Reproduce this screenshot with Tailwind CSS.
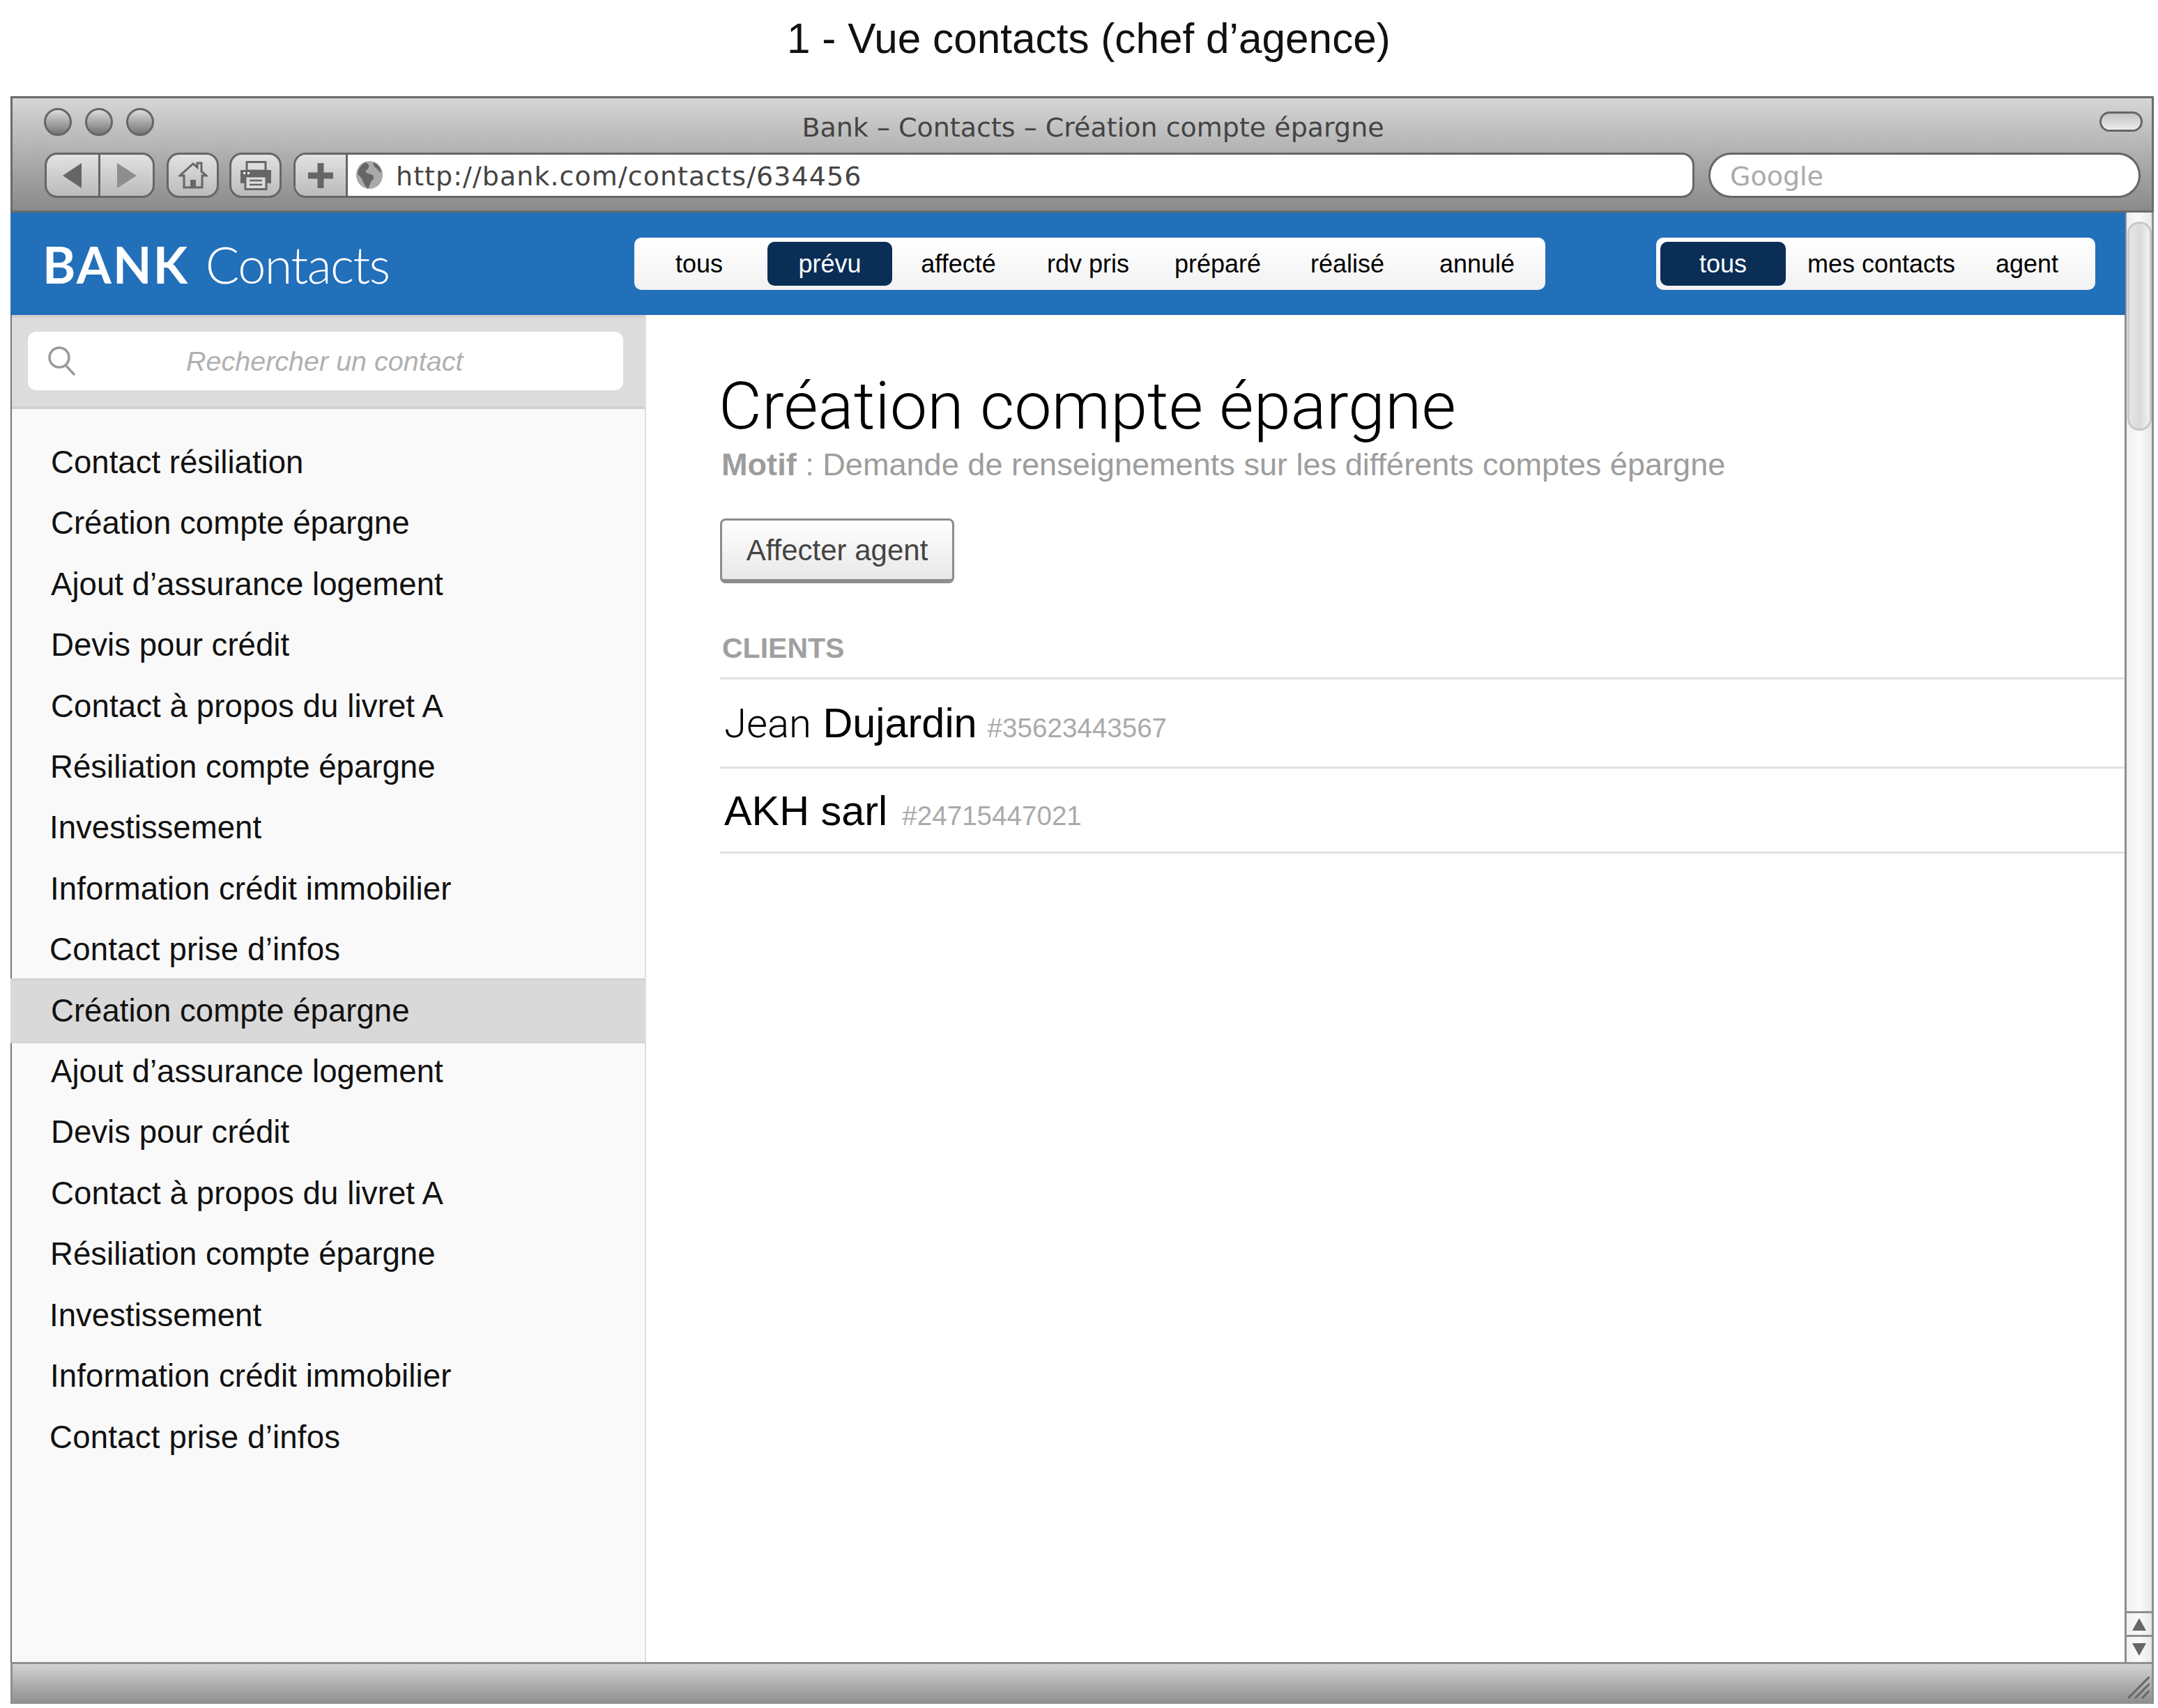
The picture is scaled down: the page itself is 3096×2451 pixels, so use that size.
<!DOCTYPE html>
<html lang="fr">
<head>
<meta charset="UTF-8">
<title>Bank - Contacts</title>
<script src="https://cdn.jsdelivr.net/npm/@tailwindcss/browser@4"></script>
</head>
<body class="bg-white font-['Liberation_Sans',sans-serif] w-[3096px] h-[2451px] overflow-hidden">
  <h1 class="h-[138px] pt-[22px] pl-[28px] text-center text-[60.3px] leading-[66px] text-[#111] font-normal">1 - Vue contacts (chef d’agence)</h1>

  <div class="ml-[15px] w-[3075px] h-[2307px] flex flex-col">
    <!-- browser toolbar -->
    <div class="h-[167px] shrink-0 border-[3px] border-[#6b6b6b] bg-gradient-to-b from-[#d6d6d6] to-[#8a8a8a] flex flex-col font-['DejaVu_Sans',sans-serif]">
      <div class="h-[78px] flex">
        <div class="w-[204px] pl-[45px] pt-[14px] flex gap-[19px]">
          <span class="size-[40px] rounded-full border-[3px] border-[#666] bg-gradient-to-b from-[#dcdcdc] to-[#777]"></span>
          <span class="size-[40px] rounded-full border-[3px] border-[#666] bg-gradient-to-b from-[#dcdcdc] to-[#777]"></span>
          <span class="size-[40px] rounded-full border-[3px] border-[#666] bg-gradient-to-b from-[#dcdcdc] to-[#777]"></span>
        </div>
        <div class="flex-1 text-center pt-[19px] text-[38px] leading-[46px] text-[#444] whitespace-nowrap">Bank – Contacts – Création compte épargne</div>
        <div class="w-[173px] flex justify-end pr-[13px] pt-[19px]">
          <span class="w-[62px] h-[29px] rounded-full border-[3px] border-[#666] bg-gradient-to-b from-[#c4c4c4] via-[#d8d8d8] to-[#eee]"></span>
        </div>
      </div>
      <div class="h-[65px] flex pl-[46px]">
        <div class="w-[158px] h-full flex rounded-[18px] border-[3px] border-[#666] bg-gradient-to-b from-[#e2e2e2] to-[#bbb] overflow-hidden">
          <div class="w-[77px] flex items-center justify-center border-r-[3px] border-[#666]">
            <svg width="28" height="36" viewBox="0 0 28 36"><path d="M27 0V36L0 18Z" fill="#666"/></svg>
          </div>
          <div class="flex-1 flex items-center justify-center">
            <svg width="28" height="36" viewBox="0 0 28 36"><path d="M0 0V36L28 18Z" fill="#8e8e8e"/></svg>
          </div>
        </div>
        <div class="ml-[17px] w-[75px] h-full flex items-center justify-center rounded-[18px] border-[3px] border-[#666] bg-gradient-to-b from-[#e2e2e2] to-[#bbb]">
          <svg width="42" height="40" viewBox="0 0 42 40" fill="none" stroke="#666" stroke-width="3"><path d="M2 20L21 3L27 8V2H33V14L40 20H34V37H8V20Z" stroke-linejoin="miter"/><path d="M17 37V26H25V37Z" fill="#666" stroke="none"/></svg>
        </div>
        <div class="ml-[15px] w-[75px] h-full flex items-center justify-center rounded-[18px] border-[3px] border-[#666] bg-gradient-to-b from-[#e2e2e2] to-[#bbb]">
          <svg width="44" height="42" viewBox="0 0 44 42"><path d="M9 1.5H36V14H9Z" fill="#ddd" stroke="#666" stroke-width="3"/><path d="M0 13H44V32H0Z" fill="#666"/><path d="M7 22H37V40.5H7Z" fill="#ddd" stroke="#666" stroke-width="3"/><path d="M13 28H31M13 34H31" stroke="#666" stroke-width="2.5"/><path d="M4 16H7V19H4ZM10 16H13V19H10Z" fill="#eee"/></svg>
        </div>
        <div class="ml-[17px] w-[2010px] h-full flex rounded-[18px] border-[3px] border-[#666] bg-white overflow-hidden">
          <div class="w-[75px] shrink-0 flex items-center justify-center border-r-[3px] border-[#666] bg-gradient-to-b from-[#e2e2e2] to-[#bbb]">
            <svg width="36" height="36" viewBox="0 0 36 36"><path d="M13.5 0H22.5V13.5H36V22.5H22.5V36H13.5V22.5H0V13.5H13.5Z" fill="#666"/></svg>
          </div>
          <svg class="ml-[12px] mt-[9px] shrink-0" width="38" height="40" viewBox="0 0 40 40" preserveAspectRatio="none"><circle cx="20" cy="20" r="20" fill="#aaa"/><path d="M14 2C8 5 3 11 2 19C5 22 9 24 10 29C12 33 14 37 18 40C21 35 21 30 25 27C28 24 26 20 22 19C18 18 15 18 14 14C17 13 20 10 19 6C18 4 16 3 14 2ZM26 2C25 6 28 9 31 11C34 13 35 16 38 17C38 11 33 4 26 2Z" fill="#666"/></svg>
          <span class="ml-[19px] mt-[8px] text-[38px] leading-[46px] tracking-[1.05px] text-[#444] whitespace-nowrap">http://bank.com/contacts/634456</span>
        </div>
        <div class="ml-[20px] w-[620px] h-full rounded-full border-[3px] border-[#666] bg-white pl-[28px] pt-[8px] text-[38px] leading-[46px] text-[#aaa]">Google</div>
      </div>
    </div>

    <div class="flex-1 min-h-0 flex border-l-[2px] border-[#777]">
      <div class="flex-1 min-w-0 flex flex-col">
        <!-- app header -->
        <header class="h-[147px] shrink-0 bg-[#226fba] flex items-center text-[36px] -ml-[2px] mr-[-1px] relative">
          <div class="w-[895px] pl-[46px] text-white text-[72px] leading-[80px] font-['Lato',sans-serif] whitespace-nowrap"><span class="font-bold tracking-[2.2px]">BANK</span> <span class="ml-[5px] font-light tracking-[-1.5px]">Contacts</span></div>
          <div class="w-[1307px] h-[75px] grid grid-cols-[repeat(7,186px)] rounded-[10px] bg-gradient-to-b from-white to-[#f2f2f2] text-black items-center text-center">
            <span>tous</span>
            <span class="ml-[5px] mr-[2px] h-[63px] leading-[63px] rounded-[10px] bg-[#0a2e56] text-white">prévu</span>
            <span>affecté</span>
            <span>rdv pris</span>
            <span>préparé</span>
            <span>réalisé</span>
            <span>annulé</span>
          </div>
          <div class="ml-[159px] w-[630px] h-[75px] pl-[6px] flex rounded-[10px] bg-gradient-to-b from-white to-[#f2f2f2] text-black items-center text-center">
            <span class="w-[180px] h-[63px] leading-[63px] rounded-[10px] bg-[#0a2e56] text-white">tous</span>
            <span class="w-[254px] pl-[20px] whitespace-nowrap">mes contacts</span>
            <span class="w-[184px]">agent</span>
          </div>
        </header>

        <div class="flex-1 min-h-0 flex">
          <!-- sidebar -->
          <aside class="w-[910px] shrink-0 bg-[#f9f9f9] border-r-[2px] border-[#dedede] text-[45.6px] leading-[87.4px] text-[#111]">
            <div class="h-[135px] bg-[#dcdcdc] border-y-[4px] border-[#d0d0d0] pt-[20px] pl-[23px] pr-[31px]">
              <div class="h-[84px] rounded-[12px] bg-white flex items-center text-[39.5px] italic text-[#b0b0b0]">
                <svg class="ml-[29px] shrink-0" width="40" height="42" viewBox="0 0 40 42" fill="none" stroke="#999" stroke-width="3.5"><circle cx="16" cy="16" r="14"/><path d="M25 27L38 41"/></svg>
                <span class="ml-[158px] leading-[50px] whitespace-nowrap">Rechercher un contact</span>
              </div>
            </div>
            <ul class="pt-[33px] pl-[56px]">
              <li>Contact résiliation</li>
              <li>Création compte épargne</li>
              <li>Ajout d’assurance logement</li>
              <li>Devis pour crédit</li>
              <li class="tracking-[0.1px]">Contact à propos du livret A</li>
              <li class="-ml-[1px]">Résiliation compte épargne</li>
              <li class="-ml-[2px]">Investissement</li>
              <li class="-ml-[1px] tracking-[0.1px]">Information crédit immobilier</li>
              <li class="-ml-[2px] tracking-[0.2px]">Contact prise d’infos</li>
              <li class="-ml-[58px] pl-[58px] h-[93px] leading-[87px] -my-[2.8px] bg-[#d9d9d9] border-y-[3px] border-[#d2d2d2]">Création compte épargne</li>
              <li>Ajout d’assurance logement</li>
              <li>Devis pour crédit</li>
              <li class="tracking-[0.1px]">Contact à propos du livret A</li>
              <li class="-ml-[1px]">Résiliation compte épargne</li>
              <li class="-ml-[2px]">Investissement</li>
              <li class="-ml-[1px] tracking-[0.1px]">Information crédit immobilier</li>
              <li class="-ml-[2px] tracking-[0.2px]">Contact prise d’infos</li>
            </ul>
          </aside>

          <!-- detail -->
          <main class="flex-1 min-w-0 pl-[106px] pt-[75px] bg-white">
            <h2 class="-ml-[2px] text-[95.4px] leading-[110px] font-light font-['Roboto',sans-serif] text-black whitespace-nowrap">Création compte épargne</h2>
            <p class="ml-[2px] mt-[2px] text-[45.1px] leading-[56px] text-[#9d9d9d] whitespace-nowrap"><b class="font-bold">Motif</b> : Demande de renseignements sur les différents comptes épargne</p>
            <button class="block mt-[49px] w-[336px] h-[93px] rounded-[8px] border-[3px] border-b-[6px] border-[#8c8c8c] bg-gradient-to-b from-white to-[#e8e8e8] text-[42px] text-[#444]">Affecter agent</button>
            <div class="mt-[70px] h-[44px] pl-[3px] text-[41px] leading-[46px] font-bold text-[#a0a0a0]">CLIENTS</div>
            <ul class="mt-[21px] border-t-[3px] border-[#e2e2e2]">
              <li class="h-[128px] pl-[6px] pt-[28px] border-b-[3px] border-[#e2e2e2] flex items-baseline text-[59.4px] leading-[70px] text-black"><span><span class="text-[58px] font-light font-['Roboto',sans-serif]">Jean</span> Dujardin</span><span class="ml-[15px] text-[38.6px] text-[#aaa]">#35623443567</span></li>
              <li class="h-[122px] pl-[6px] pt-[26px] border-b-[3px] border-[#e2e2e2] flex items-baseline text-[59.4px] leading-[70px] text-black">AKH sarl<span class="ml-[21px] text-[38.6px] text-[#aaa]">#24715447021</span></li>
            </ul>
          </main>
        </div>
      </div>

      <!-- scrollbar -->
      <div class="w-[42px] shrink-0 border-x-[3px] border-[#8f8f8f] bg-gradient-to-r from-[#f0f0f0] via-[#fafafa] to-[#e8e8e8] flex flex-col">
        <div class="flex-1 pt-[13px]">
          <div class="ml-[1px] w-[35px] h-[300px] rounded-[17px] border-[3px] border-[#c8c8c8] bg-gradient-to-r from-[#e6e6e6] via-[#dadada] to-[#f2f2f2]"></div>
        </div>
        <div class="h-[34px] border-t-[3px] border-[#8f8f8f] flex items-center justify-center">
          <svg width="20" height="18" viewBox="0 0 20 18"><path d="M10 0L20 18H0Z" fill="#666"/></svg>
        </div>
        <div class="h-[39px] border-t-[3px] border-[#8f8f8f] flex items-center justify-center">
          <svg width="20" height="18" viewBox="0 0 20 18"><path d="M0 0H20L10 18Z" fill="#666"/></svg>
        </div>
      </div>
    </div>

    <!-- status bar -->
    <div class="h-[60px] shrink-0 border-x-[3px] border-t-[3px] border-[#8f8f8f] bg-gradient-to-b from-[#d2d2d2] to-[#8e8e8e] flex justify-end items-end pr-[3px] pb-[7px]">
      <svg width="32" height="32" viewBox="0 0 32 32" stroke="#666" stroke-width="3" stroke-linecap="round"><path d="M2 30L31 1M12 30L31 11M22 30L31 21"/></svg>
    </div>
  </div>
</body>
</html>
